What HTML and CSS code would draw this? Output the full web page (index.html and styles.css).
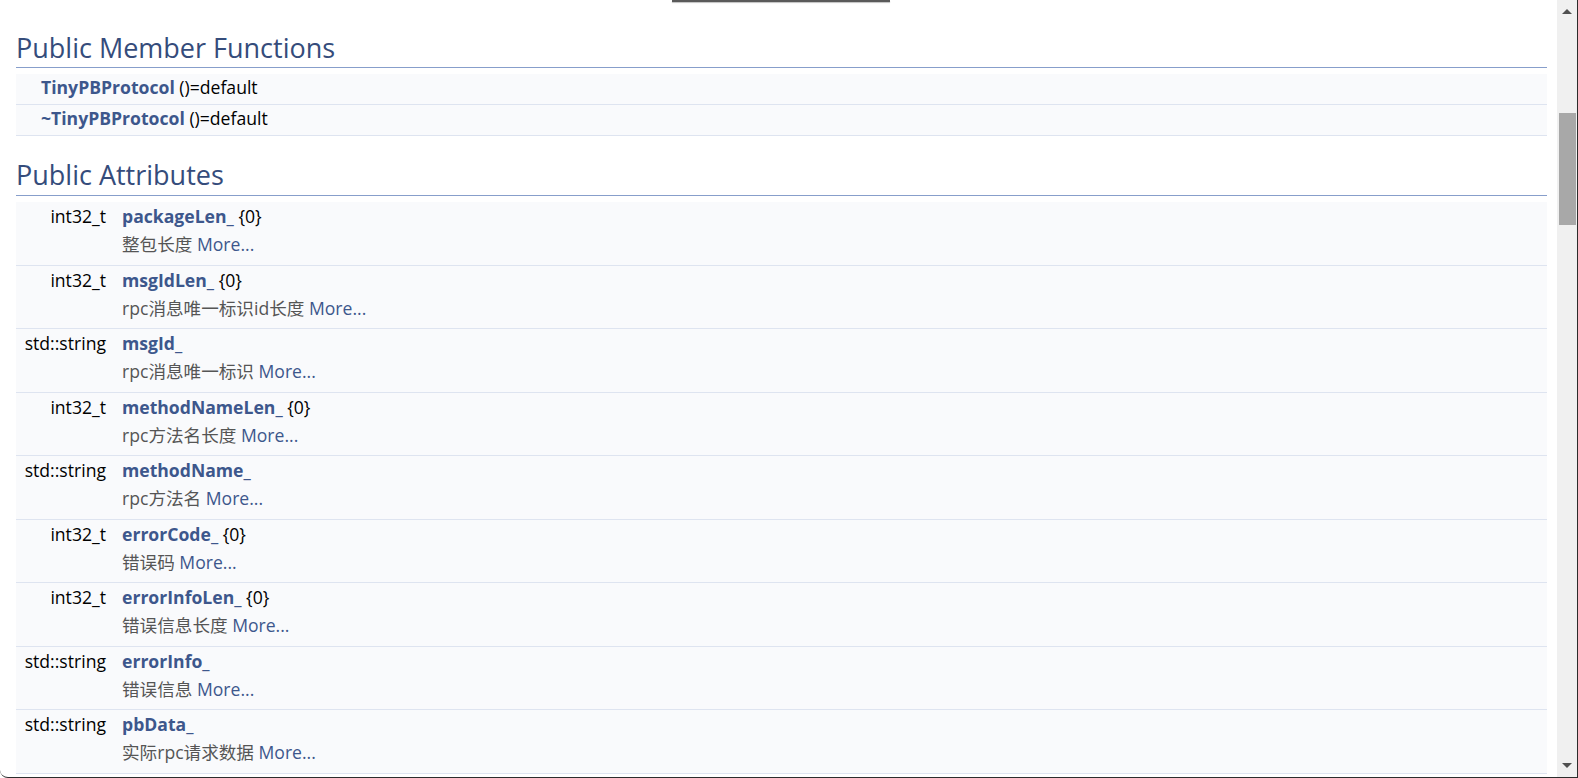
FILE: index.html
```html
<!DOCTYPE html>
<html lang="en">
<head>
<meta charset="utf-8">
<title>TinyPBProtocol Struct Reference</title>
<link rel="stylesheet" href="styles.css">
</head>
<body>
<div class="window">
  <div class="page">
    <div class="topbar"></div>

    <h2 class="groupheader first">Public Member Functions</h2>
    <div class="memberdecls">
      <div class="memitem fn">
        <div class="name"><a class="el">TinyPBProtocol</a> ()=default</div>
      </div>
      <div class="memitem fn">
        <div class="name"><a class="el">~TinyPBProtocol</a> ()=default</div>
      </div>
    </div>

    <h2 class="groupheader">Public Attributes</h2>
    <div class="memberdecls">
      <div class="memitem attr">
        <div class="type">int32_t</div>
        <div class="right">
          <div class="name"><a class="el">packageLen_</a> {0}</div>
          <div class="mdesc">整包长度 <a class="more">More...</a></div>
        </div>
      </div>
      <div class="memitem attr">
        <div class="type">int32_t</div>
        <div class="right">
          <div class="name"><a class="el">msgIdLen_</a> {0}</div>
          <div class="mdesc">rpc消息唯一标识id长度 <a class="more">More...</a></div>
        </div>
      </div>
      <div class="memitem attr">
        <div class="type">std::string</div>
        <div class="right">
          <div class="name"><a class="el">msgId_</a></div>
          <div class="mdesc">rpc消息唯一标识 <a class="more">More...</a></div>
        </div>
      </div>
      <div class="memitem attr">
        <div class="type">int32_t</div>
        <div class="right">
          <div class="name"><a class="el">methodNameLen_</a> {0}</div>
          <div class="mdesc">rpc方法名长度 <a class="more">More...</a></div>
        </div>
      </div>
      <div class="memitem attr">
        <div class="type">std::string</div>
        <div class="right">
          <div class="name"><a class="el">methodName_</a></div>
          <div class="mdesc">rpc方法名 <a class="more">More...</a></div>
        </div>
      </div>
      <div class="memitem attr">
        <div class="type">int32_t</div>
        <div class="right">
          <div class="name"><a class="el">errorCode_</a> {0}</div>
          <div class="mdesc">错误码 <a class="more">More...</a></div>
        </div>
      </div>
      <div class="memitem attr">
        <div class="type">int32_t</div>
        <div class="right">
          <div class="name"><a class="el">errorInfoLen_</a> {0}</div>
          <div class="mdesc">错误信息长度 <a class="more">More...</a></div>
        </div>
      </div>
      <div class="memitem attr">
        <div class="type">std::string</div>
        <div class="right">
          <div class="name"><a class="el">errorInfo_</a></div>
          <div class="mdesc">错误信息 <a class="more">More...</a></div>
        </div>
      </div>
      <div class="memitem attr">
        <div class="type">std::string</div>
        <div class="right">
          <div class="name"><a class="el">pbData_</a></div>
          <div class="mdesc">实际rpc请求数据 <a class="more">More...</a></div>
        </div>
      </div>
    </div>
  </div>
  <div class="scrollbar">
    <div class="arrow up"></div>
    <div class="thumb"></div>
    <div class="spacer"></div>
    <div class="arrow down"></div>
  </div>
</div>
</body>
</html>
```
FILE: styles.css
```css
html, body {
  margin: 0;
  padding: 0;
  background: #ffffff;
  overflow: hidden;
}

body {
  font-family: "Open Sans", "Noto Sans CJK SC", sans-serif;
  font-size: 17.6px;
  color: #000000;
}

.window {
  display: flex;
  width: 1578px;
  height: 778px;
  box-sizing: border-box;
  border-right: 1px solid #2c2c2c;
  border-bottom: 1px solid #2c2c2c;
  border-bottom-left-radius: 8px;
  overflow: hidden;
}

.page {
  flex: 1;
  min-width: 0;
  padding: 0 10px 0 16px;
  overflow: hidden;
}

.topbar {
  width: 218px;
  height: 2px;
  margin-left: 656px;
  background: #5a5a5a;
  box-shadow: 0 1px 1px rgba(0, 0, 0, 0.25);
}

.groupheader {
  margin: 0;
  color: #354C7B;
  font-weight: normal;
  font-size: 27px;
  line-height: 34px;
  padding: 0 0 2px 0;
  border-bottom: 1px solid #879ECB;
}

.groupheader.first {
  margin-top: 29px;
}

.groupheader:not(.first) {
  margin-top: 22px;
  padding-bottom: 3px;
}

.memberdecls {
  margin-top: 6px;
}

.memitem {
  display: flex;
  background: #F9FAFC;
  border-bottom: 1px solid #DEE4F0;
}

.memitem.fn {
  height: 30px;
  line-height: 26px;
}

.memitem.fn .name {
  padding-left: 25px;
}

.memitem.attr {
  height: 62.5px;
  line-height: 28px;
}

.type {
  width: 90px;
  padding-right: 6px;
  text-align: right;
  white-space: nowrap;
  flex: none;
}

.right {
  padding-left: 10px;
}

.el {
  color: #3D578C;
  font-weight: bold;
  text-decoration: none;
}

.mdesc {
  color: #555555;
}

.more {
  color: #3D578C;
  text-decoration: none;
}

.scrollbar {
  width: 20px;
  flex: none;
  background: #f0f0f0;
  display: flex;
  flex-direction: column;
  align-items: center;
}

.arrow {
  width: 0;
  height: 0;
  border-left: 5px solid transparent;
  border-right: 5px solid transparent;
}

.arrow.up {
  margin-top: 9px;
  border-bottom: 5px solid #505050;
}

.arrow.down {
  margin-bottom: 9px;
  border-top: 5px solid #505050;
}

.thumb {
  width: 17px;
  height: 112px;
  margin-top: 99px;
  background: #a8a8a8;
}

.spacer {
  flex: 1;
}
```
